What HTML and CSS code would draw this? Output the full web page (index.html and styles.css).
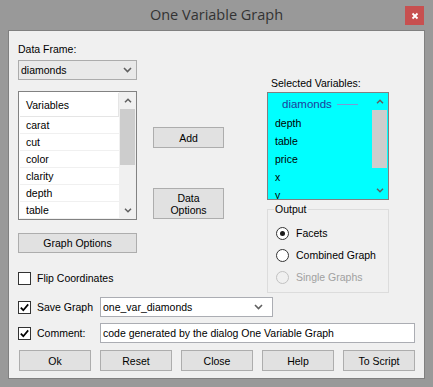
FILE: index.html
```html
<!DOCTYPE html>
<html>
<head>
<meta charset="utf-8">
<link rel="stylesheet" href="styles.css">
</head>
<body>
<div class="window">
  <div class="titlebar">
    <span></span>
    <span class="title">One Variable Graph</span>
    <span class="close-btn"><svg width="8" height="8" viewBox="0 0 8 8"><path d="M1.5 1.5 L6.5 6.5 M6.5 1.5 L1.5 6.5" stroke="#fff" stroke-width="1.8" fill="none"/></svg></span>
  </div>
  <div class="client">
    <div class="top">
      <div class="col-left">
        <div class="label">Data Frame:</div>
        <div class="combo combo-ro">
          <span class="combo-text">diamonds</span>
          <svg class="chev" width="9" height="6" viewBox="0 0 9 6"><path d="M1 1 L4.5 4.5 L8 1" fill="none" stroke="#606060" stroke-width="1.6"/></svg>
        </div>
        <div class="listbox vars">
          <div class="list-main">
            <div class="list-header"><span>Variables</span></div>
            <div class="lrow">carat</div>
            <div class="lrow">cut</div>
            <div class="lrow">color</div>
            <div class="lrow">clarity</div>
            <div class="lrow">depth</div>
            <div class="lrow">table</div>
          </div>
          <div class="vscroll">
            <div class="sarrow"><svg width="8" height="5" viewBox="0 0 8 5"><path d="M1 4.2 L4 1.2 L7 4.2" fill="none" stroke="#606060" stroke-width="1.5"/></svg></div>
            <div class="strack"><div class="sthumb thumb-vars"></div></div>
            <div class="sarrow"><svg width="8" height="5" viewBox="0 0 8 5"><path d="M1 0.8 L4 3.8 L7 0.8" fill="none" stroke="#606060" stroke-width="1.5"/></svg></div>
          </div>
        </div>
        <button class="btn btn-graph">Graph Options</button>
        <div class="check-row flip-row">
          <span class="check"></span>
          <span class="check-label">Flip Coordinates</span>
        </div>
      </div>
      <div class="col-mid">
        <button class="btn btn-add">Add</button>
        <button class="btn btn-data">Data<br>Options</button>
      </div>
      <div class="col-right">
        <div class="label sel-label">Selected Variables:</div>
        <div class="listbox selected">
          <div class="list-main sel-main">
            <div class="group-header"><span class="group-name">diamonds</span><span class="group-line"></span></div>
            <div class="srow">depth</div>
            <div class="srow">table</div>
            <div class="srow">price</div>
            <div class="srow">x</div>
            <div class="srow">y</div>
          </div>
          <div class="vscroll vscroll-cyan">
            <div class="sarrow"><svg width="8" height="5" viewBox="0 0 8 5"><path d="M1 4.2 L4 1.2 L7 4.2" fill="none" stroke="#606060" stroke-width="1.5"/></svg></div>
            <div class="strack"><div class="sthumb thumb-sel"></div></div>
            <div class="sarrow"><svg width="8" height="5" viewBox="0 0 8 5"><path d="M1 0.8 L4 3.8 L7 0.8" fill="none" stroke="#606060" stroke-width="1.5"/></svg></div>
          </div>
        </div>
        <fieldset class="group">
          <legend>Output</legend>
          <div class="radio-row"><span class="radio checked"></span><span>Facets</span></div>
          <div class="radio-row"><span class="radio"></span><span>Combined Graph</span></div>
          <div class="radio-row disabled"><span class="radio"></span><span>Single Graphs</span></div>
        </fieldset>
      </div>
    </div>
    <div class="check-row field-row save-row">
      <span class="check"><svg width="11" height="11" viewBox="0 0 11 11"><path d="M1.8 5.6 L4.3 8.2 L9.2 2.4" stroke="#000" stroke-width="1.7" fill="none"/></svg></span>
      <span class="check-label fixed">Save Graph</span>
      <div class="combo combo-edit">
        <span class="combo-text">one_var_diamonds</span>
        <svg class="chev" width="9" height="6" viewBox="0 0 9 6"><path d="M1 1 L4.5 4.5 L8 1" fill="none" stroke="#606060" stroke-width="1.6"/></svg>
      </div>
    </div>
    <div class="check-row field-row comment-row">
      <span class="check"><svg width="11" height="11" viewBox="0 0 11 11"><path d="M1.8 5.6 L4.3 8.2 L9.2 2.4" stroke="#000" stroke-width="1.7" fill="none"/></svg></span>
      <span class="check-label fixed">Comment:</span>
      <div class="textbox">code generated by the dialog One Variable Graph</div>
    </div>
    <div class="actions">
      <button class="btn btn-act">Ok</button>
      <button class="btn btn-act">Reset</button>
      <button class="btn btn-act">Close</button>
      <button class="btn btn-act">Help</button>
      <button class="btn btn-act">To Script</button>
    </div>
  </div>
</div>
</body>
</html>
```
FILE: styles.css
```css
* { box-sizing: border-box; }
html, body { margin: 0; padding: 0; }
body {
  width: 433px;
  height: 387px;
  overflow: hidden;
  font-family: "Liberation Sans", Arial, sans-serif;
  font-size: 10.5px;
  color: #000;
}
.window {
  width: 433px;
  height: 387px;
  background: #999999;
  display: flex;
  flex-direction: column;
}
.titlebar {
  height: 30px;
  display: grid;
  grid-template-columns: 1fr auto 1fr;
  align-items: start;
}
.title {
  font-family: "Open Sans", "Noto Sans", sans-serif;
  font-size: 14.5px;
  color: #333333;
  line-height: 20px;
  margin-top: 5px;
}
.close-btn {
  justify-self: end;
  width: 19px;
  height: 19px;
  margin-top: 6px;
  margin-right: 9px;
  background: #c75050;
  display: flex;
  align-items: center;
  justify-content: center;
}
.client {
  margin-left: 8px;
  width: 417px;
  height: 349px;
  border: 1px solid #808080;
  background: #f0f0f0;
  padding: 12px 9px 7px 9px;
  display: flex;
  flex-direction: column;
}
.top { display: flex; }
.col-left { width: 119px; display: flex; flex-direction: column; }
.col-mid { width: 71px; margin-left: 16px; display: flex; flex-direction: column; }
.col-right { width: 122px; margin-left: 43px; display: flex; flex-direction: column; }
.label { line-height: 13px; height: 13px; white-space: nowrap; }
.sel-label { margin-top: 34px; padding-left: 4px; }
.combo {
  height: 20px;
  display: flex;
  align-items: center;
  justify-content: space-between;
  padding: 0 4px 0 2px;
  white-space: nowrap;
}
.combo-ro {
  margin-top: 4px;
  background: #e9e9e9;
  border: 1px solid #acacac;
}
.combo-edit {
  width: 173px;
  background: #fff;
  border: 1px solid #abadb3;
  padding-left: 2px;
  padding-right: 9px;
}
.listbox { display: flex; border: 1px solid #828282; }
.vars { margin-top: 11px; height: 129px; background: #fff; }
.list-main { flex: 1; padding: 1px 0 0 1px; overflow: hidden; }
.list-header {
  height: 24px;
  border-bottom: 1px solid #e5e5e5;
  border-right: 1px solid #e5e5e5;
  display: flex;
  align-items: center;
  padding-left: 6px;
}
.lrow {
  height: 17px;
  border-bottom: 1px solid #f0f0f0;
  line-height: 16px;
  padding-left: 6px;
}
.vscroll {
  width: 17px;
  display: flex;
  flex-direction: column;
  background: #f0f0f0;
}
.vscroll-cyan { background: #00ffff; }
.sarrow { height: 17px; display: flex; align-items: center; justify-content: center; }
.strack { flex: 1; }
.sthumb { margin: 0 1px; background: #cdcdcd; }
.thumb-vars { height: 56px; }
.thumb-sel { height: 58px; }
.btn {
  font-family: "Liberation Sans", Arial, sans-serif;
  font-size: 10.5px;
  color: #000;
  background: #e1e1e1;
  border: 1px solid #adadad;
  padding: 0;
  margin: 0;
  line-height: 12px;
}
.btn-graph { margin-top: 13px; height: 20px; }
.btn-add { margin-top: 84px; height: 21px; }
.btn-data { margin-top: 40px; height: 31px; }
.btn-act { width: 72px; height: 21px; }
.selected { margin-top: 2px; height: 108px; background: #00ffff; border-color: #808080; }
.sel-main { padding: 0; }
.group-header {
  height: 21px;
  display: flex;
  align-items: center;
  padding-left: 14px;
  color: #1e3c9c;
  font-size: 11.5px;
}
.group-line { width: 21px; height: 1px; background: #7b9ad6; margin-left: 5px; margin-top: 1px; }
.srow { height: 18px; line-height: 18px; padding-left: 7px; }
.group {
  margin: 3px 0 0 0;
  padding: 6px 8px 4px 8px;
  border: 1px solid #dcdcdc;
  min-width: 0;
}
.group legend {
  padding: 0 1px;
  margin-left: -2px;
  line-height: 13px;
}
.radio-row { height: 22px; display: flex; align-items: center; gap: 7px; }
.radio {
  width: 13px;
  height: 13px;
  border-radius: 50%;
  border: 1px solid #333;
  background: #fff;
  display: flex;
  align-items: center;
  justify-content: center;
}
.radio.checked::after {
  content: "";
  width: 5px;
  height: 5px;
  border-radius: 50%;
  background: #1a1a1a;
}
.disabled { color: #a0a0a0; }
.disabled .radio { border-color: #c2c2c2; background: #f0f0f0; }
.check-row { display: flex; align-items: center; height: 20px; }
.flip-row { margin-top: 15px; }
.check {
  width: 13px;
  height: 13px;
  border: 1px solid #333;
  background: #fff;
  display: flex;
  align-items: center;
  justify-content: center;
  flex: none;
}
.check-label { margin-left: 6px; white-space: nowrap; }
.fixed { width: 63px; }
.save-row { margin-top: 4px; }
.comment-row { margin-top: 6px; }
.textbox {
  width: 315px;
  height: 20px;
  background: #fff;
  border: 1px solid #abadb3;
  padding-left: 2px;
  line-height: 18px;
  white-space: nowrap;
}
.actions {
  margin-top: 7px;
  padding-left: 1px;
  display: flex;
  justify-content: space-between;
}
```
